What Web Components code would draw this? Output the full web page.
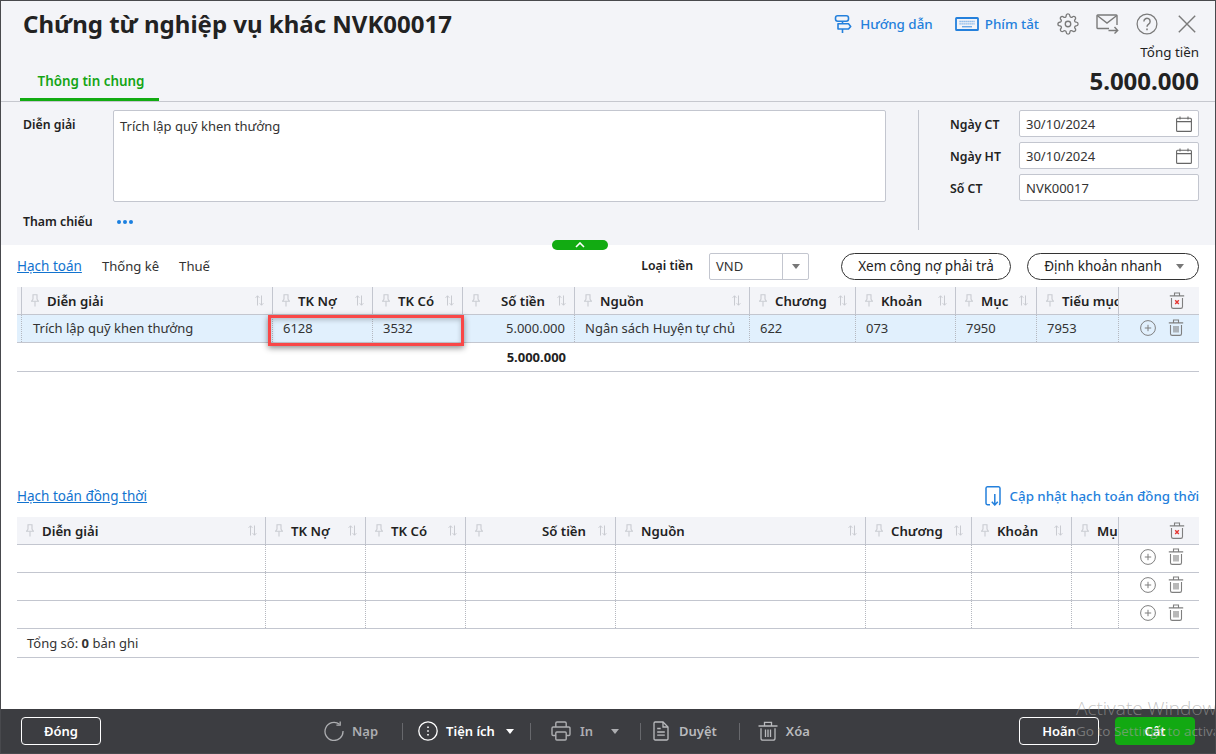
<!DOCTYPE html>
<html lang="vi">
<head>
<meta charset="utf-8">
<title>Chứng từ nghiệp vụ khác</title>
<style>
    html, body { margin: 0; padding: 0; background: #fff; }
    body { font: 13px/18px "Noto Sans", "Open Sans", sans-serif; color: #262626; width: 1216px; height: 754px; overflow: hidden; }
</style>
</head>
<body>
<vc-app>
    <vc-header slot="header" title="Chứng từ nghiệp vụ khác NVK00017" total="5.000.000"></vc-header>
    <vc-form slot="form">
        <vc-field slot="dates" label="Ngày CT" value="30/10/2024" calendar></vc-field>
        <vc-field slot="dates" label="Ngày HT" value="30/10/2024" calendar></vc-field>
        <vc-field slot="dates" label="Số CT" value="NVK00017"></vc-field>
    </vc-form>
    <vc-toolbar slot="toolbar"></vc-toolbar>
    <vc-grid slot="first" highlight
        columns="5px 251px 100px 90px 112px 175px 106px 100px 81px 82px 80px"
        heads='["", "Diễn giải", "TK Nợ", "TK Có", ">Số tiền", "Nguồn", "Chương", "Khoản", "Mục", "Tiểu mục"]'
        rows='[["", "Trích lập quỹ khen thưởng", "6128", "3532", ">5.000.000", "Ngân sách Huyện tự chủ", "622", "073", "7950", "7953"]]'
        selected
        sum="5.000.000"></vc-grid>
    <vc-section slot="section"></vc-section>
    <vc-grid slot="second" lift="2"
        columns="249px 100px 100px 150px 250px 106px 100px 47px 80px"
        heads='["Diễn giải", "TK Nợ", "TK Có", ">Số tiền", "Nguồn", "Chương", "Khoản", "Mục"]'
        rows='[["","","","","","","",""],["","","","","","","",""],["","","","","","","",""]]'
        count="0"></vc-grid>
    <vc-footer slot="footer"></vc-footer>
</vc-app>

<script>
const ICONS = {
    guide: `<svg viewBox="0 0 18 20" fill="none" stroke="currentColor" stroke-width="1.6" stroke-linejoin="round"><rect x="1.500" y="1.800" width="13" height="5.400" rx="2.200"/><path d="M4 9.800h10.500l2.200 2.600-2.200 2.600H4z"/><path d="M8.500 7.200v2.600M8.500 15v4"/></svg>`,
    keyboard: `<svg viewBox="0 0 24 14" fill="none"><rect x="1" y="1" width="22" height="12" rx=".6" stroke="currentColor" stroke-width="1.800"/><path d="M4.500 4.500h15M4.500 6.800h15" stroke="currentColor" stroke-width="1.300" stroke-dasharray="1.200 .8" opacity=".65"/><path d="M7 9.700h10" stroke="currentColor" stroke-width="1.400" opacity=".65"/></svg>`,
    gear: `<svg viewBox="0 0 24 24" fill="none" stroke="currentColor" stroke-width="1.45"><circle cx="12" cy="12" r="3"/><path d="M19.4 15a1.65 1.65 0 0 0 .33 1.82l.06.06a2 2 0 0 1 0 2.83 2 2 0 0 1-2.83 0l-.06-.06a1.65 1.65 0 0 0-1.82-.33 1.65 1.65 0 0 0-1 1.51V21a2 2 0 0 1-2 2 2 2 0 0 1-2-2v-.09A1.65 1.65 0 0 0 9 19.4a1.65 1.65 0 0 0-1.82.33l-.06.06a2 2 0 0 1-2.83 0 2 2 0 0 1 0-2.83l.06-.06a1.65 1.65 0 0 0 .33-1.82 1.65 1.65 0 0 0-1.51-1H3a2 2 0 0 1-2-2 2 2 0 0 1 2-2h.09A1.65 1.65 0 0 0 4.6 9a1.65 1.65 0 0 0-.33-1.82l-.06-.06a2 2 0 0 1 0-2.83 2 2 0 0 1 2.83 0l.06.06a1.65 1.65 0 0 0 1.82.33H9a1.65 1.65 0 0 0 1-1.51V3a2 2 0 0 1 2-2 2 2 0 0 1 2 2v.09a1.65 1.65 0 0 0 1 1.51 1.65 1.65 0 0 0 1.82-.33l.06-.06a2 2 0 0 1 2.83 0 2 2 0 0 1 0 2.83l-.06.06a1.65 1.65 0 0 0-.33 1.82V9a1.65 1.65 0 0 0 1.51 1H21a2 2 0 0 1 2 2 2 2 0 0 1-2 2h-.09a1.65 1.65 0 0 0-1.51 1z"/></svg>`,
    mail: `<svg viewBox="0 0 23 20" fill="none" stroke="currentColor" stroke-width="1.400"><path d="M13 14.500H1.700a.7.7 0 0 1-.7-.7V1.700a.7.7 0 0 1 .7-.7h18.600a.7.7 0 0 1 .7.7V11"/><path d="M1.200 1.500 11 9l9.800-7.500"/><path d="M12.500 16.500h9M18.500 13l3.200 3.500-3.200 3"/></svg>`,
    help: `<svg viewBox="0 0 24 24" fill="none" stroke="currentColor" stroke-width="1.350"><circle cx="12" cy="12" r="10.800"/><path d="M8.600 9.200a3.400 3.400 0 1 1 5.200 2.900c-1.200.8-1.800 1.400-1.800 2.900" stroke-width="1.600"/><path d="M12 17v1.800" stroke-width="1.700"/></svg>`,
    close: `<svg viewBox="0 0 18 18" fill="none" stroke="currentColor" stroke-width="1.400"><path d="M.8.8l16.400 16.400M17.200.8.8 17.200"/></svg>`,
    calendar: `<svg viewBox="0 0 16 16" fill="none" stroke="currentColor" stroke-width="1.100"><rect x=".6" y="2.200" width="14.800" height="13.200" rx="1"/><path d="M.6 5.600h14.800M4 .4v3M12 .4v3"/></svg>`,
    pin: `<svg viewBox="0 0 8 13" fill="none" stroke="currentColor" stroke-width="1.100"><path d="M2 .8h4v4.400l1.400 2H.6l1.400-2z"/><path d="M4 7.400v5"/></svg>`,
    sort: `<svg viewBox="0 0 9 11" fill="none" stroke="currentColor" stroke-width="1"><path d="M2.500 10.500V.8M.6 2.800 2.500.8l1.900 2M6.500.5v9.700M4.600 8.200l1.900 2 1.900-2"/></svg>`,
    plus: `<svg viewBox="0 0 16 16" fill="none" stroke="currentColor" stroke-width="1"><circle cx="8" cy="8" r="7.400"/><path d="M8 4.800v6.400M4.800 8h6.400"/></svg>`,
    trash: `<svg viewBox="0 0 16 17" fill="none" stroke="currentColor" stroke-width="1.100"><path d="M.8 3.900h14.400M5.500 3.800V1h5v2.800M2.500 6v8.700a1.700 1.700 0 0 0 1.700 1.700h7.600a1.700 1.700 0 0 0 1.700-1.700V6M6 7v6.500M8 7v6.500M10 7v6.500"/></svg>`,
    trashx: `<svg viewBox="0 0 16 17" fill="none" stroke="currentColor" stroke-width="1.100"><path d="M.8 3.900h14.400M5.500 3.800V1h5v2.800M2.500 6v8.700a1.700 1.700 0 0 0 1.700 1.700h7.600a1.700 1.700 0 0 0 1.700-1.700V6"/><path d="M6.200 8.200l3.600 3.800M9.800 8.200 6.200 12" stroke="#e53935" stroke-width="1.400"/></svg>`,
    update: `<svg viewBox="0 0 16 20" fill="none" stroke="currentColor" stroke-width="1.500"><path d="M5 18.800H2.400A1.500 1.500 0 0 1 1 17.300V2.300A1.500 1.500 0 0 1 2.400.8h11.200a1.500 1.500 0 0 1 1.400 1.500v15a1.500 1.500 0 0 1-1 1.400"/><path d="M9.800 8v11M6.800 15.800l3 3.200 3-3.200"/></svg>`,
    reload: `<svg viewBox="0 0 20 20" fill="none" stroke="currentColor" stroke-width="1.300"><path d="M15.500 3.300A9 9 0 1 0 19 10"/><path d="M16.200.4v3.800h-3.800"/></svg>`,
    more: `<svg viewBox="0 0 20 20" fill="none" stroke="currentColor" stroke-width="1.300"><circle cx="10" cy="10" r="9.200"/><path d="M10 5.400v1.500M10 9.200v1.500M10 13v1.500" stroke-width="1.600"/></svg>`,
    print: `<svg viewBox="0 0 20 20" fill="none" stroke="currentColor" stroke-width="1.400"><path d="M4.800 6V2.200A1.200 1.200 0 0 1 6 1h8a1.200 1.200 0 0 1 1.200 1.200V6"/><path d="M4.800 14.500H2.200A1.200 1.200 0 0 1 1 13.300V7.200A1.200 1.200 0 0 1 2.200 6h15.600A1.200 1.200 0 0 1 19 7.200v6.100a1.200 1.200 0 0 1-1.200 1.200h-2.600"/><rect x="4.800" y="11" width="10.400" height="8" rx="1"/></svg>`,
    doc: `<svg viewBox="0 0 16 20" fill="none" stroke="currentColor" stroke-width="1.300"><path d="M10 1H2.200A1.200 1.200 0 0 0 1 2.200v15.600A1.200 1.200 0 0 0 2.200 19h11.600a1.200 1.200 0 0 0 1.200-1.200V6z"/><path d="M10 1v5h5M4.200 7.500h3.500M4.200 11h7.600M4.200 14.200h7.600"/></svg>`,
    bin: `<svg viewBox="0 0 20 20" fill="none" stroke="currentColor" stroke-width="1.300"><path d="M.5 5h19M6.500 4.800V1.400h7v3.400M3 7.200v10a2 2 0 0 0 2 2h10a2 2 0 0 0 2-2v-10M7.500 8.500v7.500M10 8.500v7.500M12.500 8.500v7.500"/></svg>`
};

class VcIcon extends HTMLElement {
    constructor() {
        super();
        this.attachShadow({mode : "open"});
    }

    connectedCallback() {
        const w = this.getAttribute("w") || 16;
        const h = this.getAttribute("h") || w;
        this.shadowRoot.innerHTML = `
            <style>
                :host { display: inline-flex; flex: none; width: ${w}px; height: ${h}px; }
                svg { width: 100%; height: 100%; display: block; }
            </style>
            ${ICONS[this.getAttribute("name")]}
        `;
    }
}

class VcApp extends HTMLElement {
    constructor() {
        super();
        this.attachShadow({mode : "open"});
    }

    connectedCallback() {
        this.shadowRoot.innerHTML = `
            <style>
                :host { display: flex; flex-direction: column; position: relative; box-sizing: border-box; width: 1216px; height: 754px; border: 1px solid #48494d; overflow: hidden; background: #fff; }
                main { display: flex; flex-direction: column; flex: 1; padding: 0 16px; min-height: 0; }
                .mark { position: absolute; left: 1075px; top: 694px; width: 300px; pointer-events: none; z-index: 5; color: rgba(160,160,160,.62); font-family: "Open Sans", sans-serif; }
                .mark div:first-child { font-size: 19px; line-height: 26px; font-weight: 300; }
                .mark div:last-child { font-size: 13.500px; line-height: 18px; margin-top: 1px; }
            </style>
            <slot name="header"></slot>
            <slot name="form"></slot>
            <main>
                <slot name="toolbar"></slot>
                <slot name="first"></slot>
                <slot name="section"></slot>
                <slot name="second"></slot>
            </main>
            <slot name="footer"></slot>
            <div class="mark"><div>Activate Windows</div><div>Go to Settings to activate Windows.</div></div>
        `;
    }
}

class VcHeader extends HTMLElement {
    constructor() {
        super();
        this.attachShadow({mode : "open"});
    }

    static get styles() {
        return `
            :host { display: flex; justify-content: space-between; box-sizing: border-box; height: 101px; background: #f3f4f8; border-bottom: 1px solid #c6c8cf; padding: 0 16px 0 19px; }
            .left { display: flex; flex-direction: column; justify-content: space-between; }
            h1 { margin: 6px 0 0 3px; font-size: 24px; line-height: 34px; font-weight: 700; color: #222; white-space: nowrap; }
            .tab { width: 139px; box-sizing: border-box; height: 30px; padding: 1px 0 0 3px; text-align: center; font-size: 13.400px; color: #14a514; font-weight: 600; border-bottom: 3px solid #12ab12; }
            .right { display: flex; flex-direction: column; align-items: flex-end; }
            .tools { display: flex; align-items: center; height: 30px; margin-top: 8px; margin-right: 2px; color: #7a7a7a; }
            .link { display: flex; align-items: center; color: #2480dc; font-weight: 500; font-size: 13.400px; }
            .total-label { margin-top: 4px; line-height: 18px; font-size: 13.400px; color: #222; }
            .total { font-size: 24px; line-height: 32px; font-weight: 700; color: #222; margin-top: 4px; }
        `;
    }

    connectedCallback() {
        this.shadowRoot.innerHTML = `
            <style>${VcHeader.styles}</style>
            <div class="left">
                <h1>${this.getAttribute("title")}</h1>
                <div class="tab">Thông tin chung</div>
            </div>
            <div class="right">
                <div class="tools">
                    <span class="link"><vc-icon name="guide" w="18" h="20"></vc-icon><span style="margin-left:8px">Hướng dẫn</span></span>
                    <span class="link" style="margin-left:22px"><vc-icon name="keyboard" w="24" h="14"></vc-icon><span style="margin-left:6px">Phím tắt</span></span>
                    <vc-icon name="gear" w="22" style="margin-left:18px"></vc-icon>
                    <vc-icon name="mail" w="23" h="20" style="margin-left:17px"></vc-icon>
                    <vc-icon name="help" w="22" style="margin-left:17px"></vc-icon>
                    <vc-icon name="close" w="18" style="margin-left:20px;margin-right:1px"></vc-icon>
                </div>
                <div class="total-label">Tổng tiền</div>
                <div class="total">${this.getAttribute("total")}</div>
            </div>
        `;
    }
}

class VcField extends HTMLElement {
    constructor() {
        super();
        this.attachShadow({mode : "open"});
    }

    connectedCallback() {
        this.shadowRoot.innerHTML = `
            <style>
                :host { display: flex; align-items: center; height: 27px; margin-bottom: 5px; }
                label { width: 69px; padding-top: 2px; font-weight: 600; font-size: 12.300px; color: #222; }
                .box { display: flex; align-items: center; justify-content: space-between; box-sizing: border-box; width: 180px; height: 27px; padding: 0 6px; background: #fff; border: 1px solid #c3c6cf; border-radius: 2px; color: #333; }
                vc-icon { color: #666; }
            </style>
            <label>${this.getAttribute("label")}</label>
            <div class="box">
                <span>${this.getAttribute("value")}</span>
                ${this.hasAttribute("calendar") ? `<vc-icon name="calendar" w="16"></vc-icon>` : ""}
            </div>
        `;
    }
}

class VcForm extends HTMLElement {
    constructor() {
        super();
        this.attachShadow({mode : "open"});
    }

    static get styles() {
        return `
            :host { display: flex; position: relative; box-sizing: border-box; height: 143px; padding: 8px 16px 0 22px; background: #f3f4f8; }
            .left { width: 863px; }
            .row { display: flex; }
            label { width: 90px; flex: none; font-weight: 600; font-size: 12.300px; color: #222; }
            .area { box-sizing: border-box; width: 773px; height: 92px; padding: 6px; background: #fff; border: 1px solid #c3c6cf; border-radius: 2px; color: #333; }
            .ref { align-items: center; margin-top: 10px; height: 20px; }
            .dots { display: flex; gap: 2px; margin-left: 4px; }
            .dots i { width: 4px; height: 4px; border-radius: 50%; background: #1a7fe0; }
            .divider { width: 1px; height: 120px; background: #c3c6cf; margin: 0 31px 0 32px; }
            .dates { display: flex; flex-direction: column; }
            .toggle { position: absolute; left: 551px; top: 138px; width: 56px; height: 10px; border-radius: 5px; background: #12ab12; display: flex; align-items: center; justify-content: center; }
        `;
    }

    connectedCallback() {
        this.shadowRoot.innerHTML = `
            <style>${VcForm.styles}</style>
            <div class="left">
                <div class="row">
                    <label style="padding-top:6px">Diễn giải</label>
                    <div class="area">Trích lập quỹ khen thưởng</div>
                </div>
                <div class="row ref">
                    <label>Tham chiếu</label>
                    <div class="dots"><i></i><i></i><i></i></div>
                </div>
            </div>
            <div class="divider"></div>
            <div class="dates"><slot name="dates"></slot></div>
            <div class="toggle"><svg width="10" height="6" viewBox="0 0 10 6" fill="none" stroke="#fff" stroke-width="1.600"><path d="M1 5l4-4 4 4"/></svg></div>
        `;
    }
}

class VcToolbar extends HTMLElement {
    constructor() {
        super();
        this.attachShadow({mode : "open"});
    }

    static get styles() {
        return `
            :host { display: flex; align-items: center; height: 42px; flex: none; }
            a { color: #1273cf; text-decoration: underline; margin-right: 20px; font-size: 13.500px; }
            span.t { margin-right: 20px; color: #333; font-size: 13.100px; }
            .money { margin-left: auto; font-weight: 600; font-size: 12.300px; margin-right: 16px; color: #222; }
            .select { display: flex; box-sizing: border-box; width: 100px; height: 27px; border: 1px solid #c3c6cf; border-radius: 2px; background: #fff; color: #333; margin-right: 32px; }
            .select span { flex: 1; padding-left: 6px; line-height: 25px; }
            .select b { width: 25px; border-left: 1px solid #c3c6cf; display: flex; align-items: center; justify-content: center; }
            .caret { width: 0; height: 0; border: 4px solid transparent; border-top: 5px solid #777; border-bottom: 0; }
            .pill { display: flex; align-items: center; justify-content: center; box-sizing: border-box; height: 27px; border: 1px solid #333; border-radius: 14px; background: #fff; color: #222; font-size: 13.500px; }
        `;
    }

    connectedCallback() {
        this.shadowRoot.innerHTML = `
            <style>${VcToolbar.styles}</style>
            <a>Hạch toán</a>
            <span class="t">Thống kê</span>
            <span class="t">Thuế</span>
            <span class="money">Loại tiền</span>
            <div class="select"><span>VND</span><b><i class="caret"></i></b></div>
            <div class="pill" style="width:170px;margin-right:16px">Xem công nợ phải trả</div>
            <div class="pill" style="width:172px;gap:14px;padding-left:2px">Định khoản nhanh<i class="caret"></i></div>
        `;
    }
}

class VcGrid extends HTMLElement {
    constructor() {
        super();
        this.attachShadow({mode : "open"});
    }

    static get styles() {
        return `
            :host { display: block; position: relative; flex: none; color: #333; }
            .row { display: grid; box-sizing: border-box; height: 28px; border-bottom: 1px solid #c3c6cf; }
            .row > div { display: flex; align-items: center; min-width: 0; overflow: hidden; white-space: nowrap; box-sizing: border-box; }
            .head { background: #f3f4f8; }
            .head > div { border-right: 1px solid #c3c6cf; padding-left: 9px; font-weight: 600; font-size: 13.200px; color: #222; }
            .head > div:empty { padding: 0; }
            .head > div:last-child { border-right: 0; }
            .head .label { flex: 1 0 auto; margin-left: 8px; }
            .head .pin { color: #c9cbd1; }
            .head .sort { color: #c9cbd1; margin: 0 8px 0 6px; }
            .head .right .label { text-align: right; margin-right: 6px; }
            .body > div { border-right: 1px dotted #b5b8c0; padding: 0 9px 2px 10px; }
            .body > div:empty { padding: 0; }
            .body > div:empty + div { padding-left: 11px; }
            .body > div:last-child { border-right: 0; }
            .body.selected { background: #e1f0fd; }
            .right { justify-content: flex-end; }
            .row > .acts { display: flex; justify-content: flex-end; gap: 12px; padding: 0 15px var(--lift, 2px) 0; color: #7f7f7f; }
            .head > .acts { padding: 0 14px 0 0; }
            .sum { height: 29px; }
            .sum > div { justify-content: flex-end; padding-right: 9px; font-weight: 700; color: #222; }
            .count { height: 29px; border-bottom: 1px solid #c3c6cf; padding-left: 10px; line-height: 28px; box-sizing: border-box; color: #333; }
            .count b { font-weight: 700; }
            .mark { position: absolute; left: 251px; top: 28px; box-sizing: border-box; width: 196px; height: 31px; border: 3px solid #f94747; box-shadow: 0 2px 6px rgba(0,0,0,.45), inset 0 2px 5px rgba(0,0,0,.22); pointer-events: none; }
        `;
    }

    headCell(text) {
        if(text === "") {
            return `<div></div>`;
        }
        const right = text[0] === ">";
        return `
            <div class="${right ? "right" : ""}">
                <vc-icon class="pin" name="pin" w="8" h="13"></vc-icon>
                <span class="label">${right ? text.slice(1) : text}</span>
                <vc-icon class="sort" name="sort" w="9" h="11"></vc-icon>
            </div>
        `;
    }

    bodyCell(text) {
        const right = text[0] === ">";
        return `<div class="${right ? "right" : ""}">${right ? text.slice(1) : text}</div>`;
    }

    connectedCallback() {
        const columns = this.getAttribute("columns");
        const heads = JSON.parse(this.getAttribute("heads"));
        const rows = JSON.parse(this.getAttribute("rows"));
        const selected = this.hasAttribute("selected") ? " selected" : "";
        const lift = this.getAttribute("lift") || 1;

        const rowsHtml = rows.map(row => `
            <div class="row body${selected}" style="grid-template-columns:${columns};--lift:${lift * 2}px">
                ${row.map(c => this.bodyCell(c)).join("")}
                <div class="acts"><vc-icon name="plus" w="16"></vc-icon><vc-icon name="trash" w="16" h="17"></vc-icon></div>
            </div>
        `).join("");

        let tail = "";
        if(this.hasAttribute("sum")) {
            const widths = columns.split(" ");
            const before = widths.slice(0, 5).reduce((a, b) => a + parseInt(b), 0);
            tail = `<div class="row sum" style="grid-template-columns:${before}px 1fr"><div>${this.getAttribute("sum")}</div><div></div></div>`;
        }
        if(this.hasAttribute("count")) {
            tail = `<div class="count">Tổng số: <b>${this.getAttribute("count")}</b> bản ghi</div>`;
        }

        this.shadowRoot.innerHTML = `
            <style>${VcGrid.styles}</style>
            <div class="row head" style="grid-template-columns:${columns}">
                ${heads.map(h => this.headCell(h)).join("")}
                <div class="acts"><vc-icon name="trashx" w="16" h="17"></vc-icon></div>
            </div>
            ${rowsHtml}
            ${tail}
            ${this.hasAttribute("highlight") ? `<div class="mark"></div>` : ""}
        `;
    }
}

class VcSection extends HTMLElement {
    constructor() {
        super();
        this.attachShadow({mode : "open"});
    }

    connectedCallback() {
        this.shadowRoot.innerHTML = `
            <style>
                :host { display: flex; align-items: center; justify-content: space-between; flex: none; height: 28px; margin: 110px 0 7px; }
                a { color: #1273cf; text-decoration: underline; font-size: 13.500px; }
                .update { display: flex; align-items: center; gap: 9px; color: #2480dc; font-weight: 500; font-size: 13.300px; }
            </style>
            <a>Hạch toán đồng thời</a>
            <div class="update"><vc-icon name="update" w="16" h="20"></vc-icon><span>Cập nhật hạch toán đồng thời</span></div>
        `;
    }
}

class VcAction extends HTMLElement {
    constructor() {
        super();
        this.attachShadow({mode : "open"});
    }

    connectedCallback() {
        const on = this.hasAttribute("on");
        const gap = this.getAttribute("gap") || 8;
        const caret = this.getAttribute("caret");
        this.shadowRoot.innerHTML = `
            <style>
                :host { display: inline-flex; align-items: center; gap: ${gap}px; font-weight: 600; color: ${on ? "#fff" : "#adaeb1"}; }
                .caret { width: 0; height: 0; border: 4px solid transparent; border-top: 5px solid currentColor; border-bottom: 0; margin-left: ${caret}px; }
            </style>
            <vc-icon name="${this.getAttribute("icon")}" w="${this.getAttribute("w") || 20}" h="20"></vc-icon>
            <span><slot></slot></span>
            ${caret ? `<i class="caret"></i>` : ""}
        `;
    }
}

class VcFooter extends HTMLElement {
    constructor() {
        super();
        this.attachShadow({mode : "open"});
    }

    static get styles() {
        return `
            :host { display: flex; align-items: center; flex: none; box-sizing: border-box; height: 44px; background: #3c3d41; padding: 0 20px 0 20px; }
            .btn { display: flex; align-items: center; justify-content: center; box-sizing: border-box; width: 80px; height: 28px; border: 1px solid #fff; border-radius: 4px; color: #fff; font-weight: 600; }
            .green { background: #12a912; border-color: #12a912; margin-left: 16px; }
            .mid { display: flex; align-items: center; margin-left: 223px; margin-right: auto; }
            .sep { width: 1px; height: 17px; background: #67686c; }
        `;
    }

    connectedCallback() {
        this.shadowRoot.innerHTML = `
            <style>${VcFooter.styles}</style>
            <div class="btn">Đóng</div>
            <div class="mid">
                <vc-action icon="reload">Nạp</vc-action>
                <div class="sep" style="margin:0 15px 0 24px"></div>
                <vc-action icon="more" on caret="3">Tiện ích</vc-action>
                <div class="sep" style="margin:0 20px 0 16px"></div>
                <vc-action icon="print" gap="9" caret="9">In</vc-action>
                <div class="sep" style="margin:0 12px 0 21px"></div>
                <vc-action icon="doc" w="16" gap="10" style="color:#b9babd">Duyệt</vc-action>
                <div class="sep" style="margin:0 18px 0 22px"></div>
                <vc-action icon="bin" style="color:#b9babd">Xóa</vc-action>
            </div>
            <div class="btn">Hoãn</div>
            <div class="btn green">Cất</div>
        `;
    }
}

customElements.define("vc-icon", VcIcon);
customElements.define("vc-app", VcApp);
customElements.define("vc-header", VcHeader);
customElements.define("vc-field", VcField);
customElements.define("vc-form", VcForm);
customElements.define("vc-toolbar", VcToolbar);
customElements.define("vc-grid", VcGrid);
customElements.define("vc-section", VcSection);
customElements.define("vc-action", VcAction);
customElements.define("vc-footer", VcFooter);
</script>
</body>
</html>
